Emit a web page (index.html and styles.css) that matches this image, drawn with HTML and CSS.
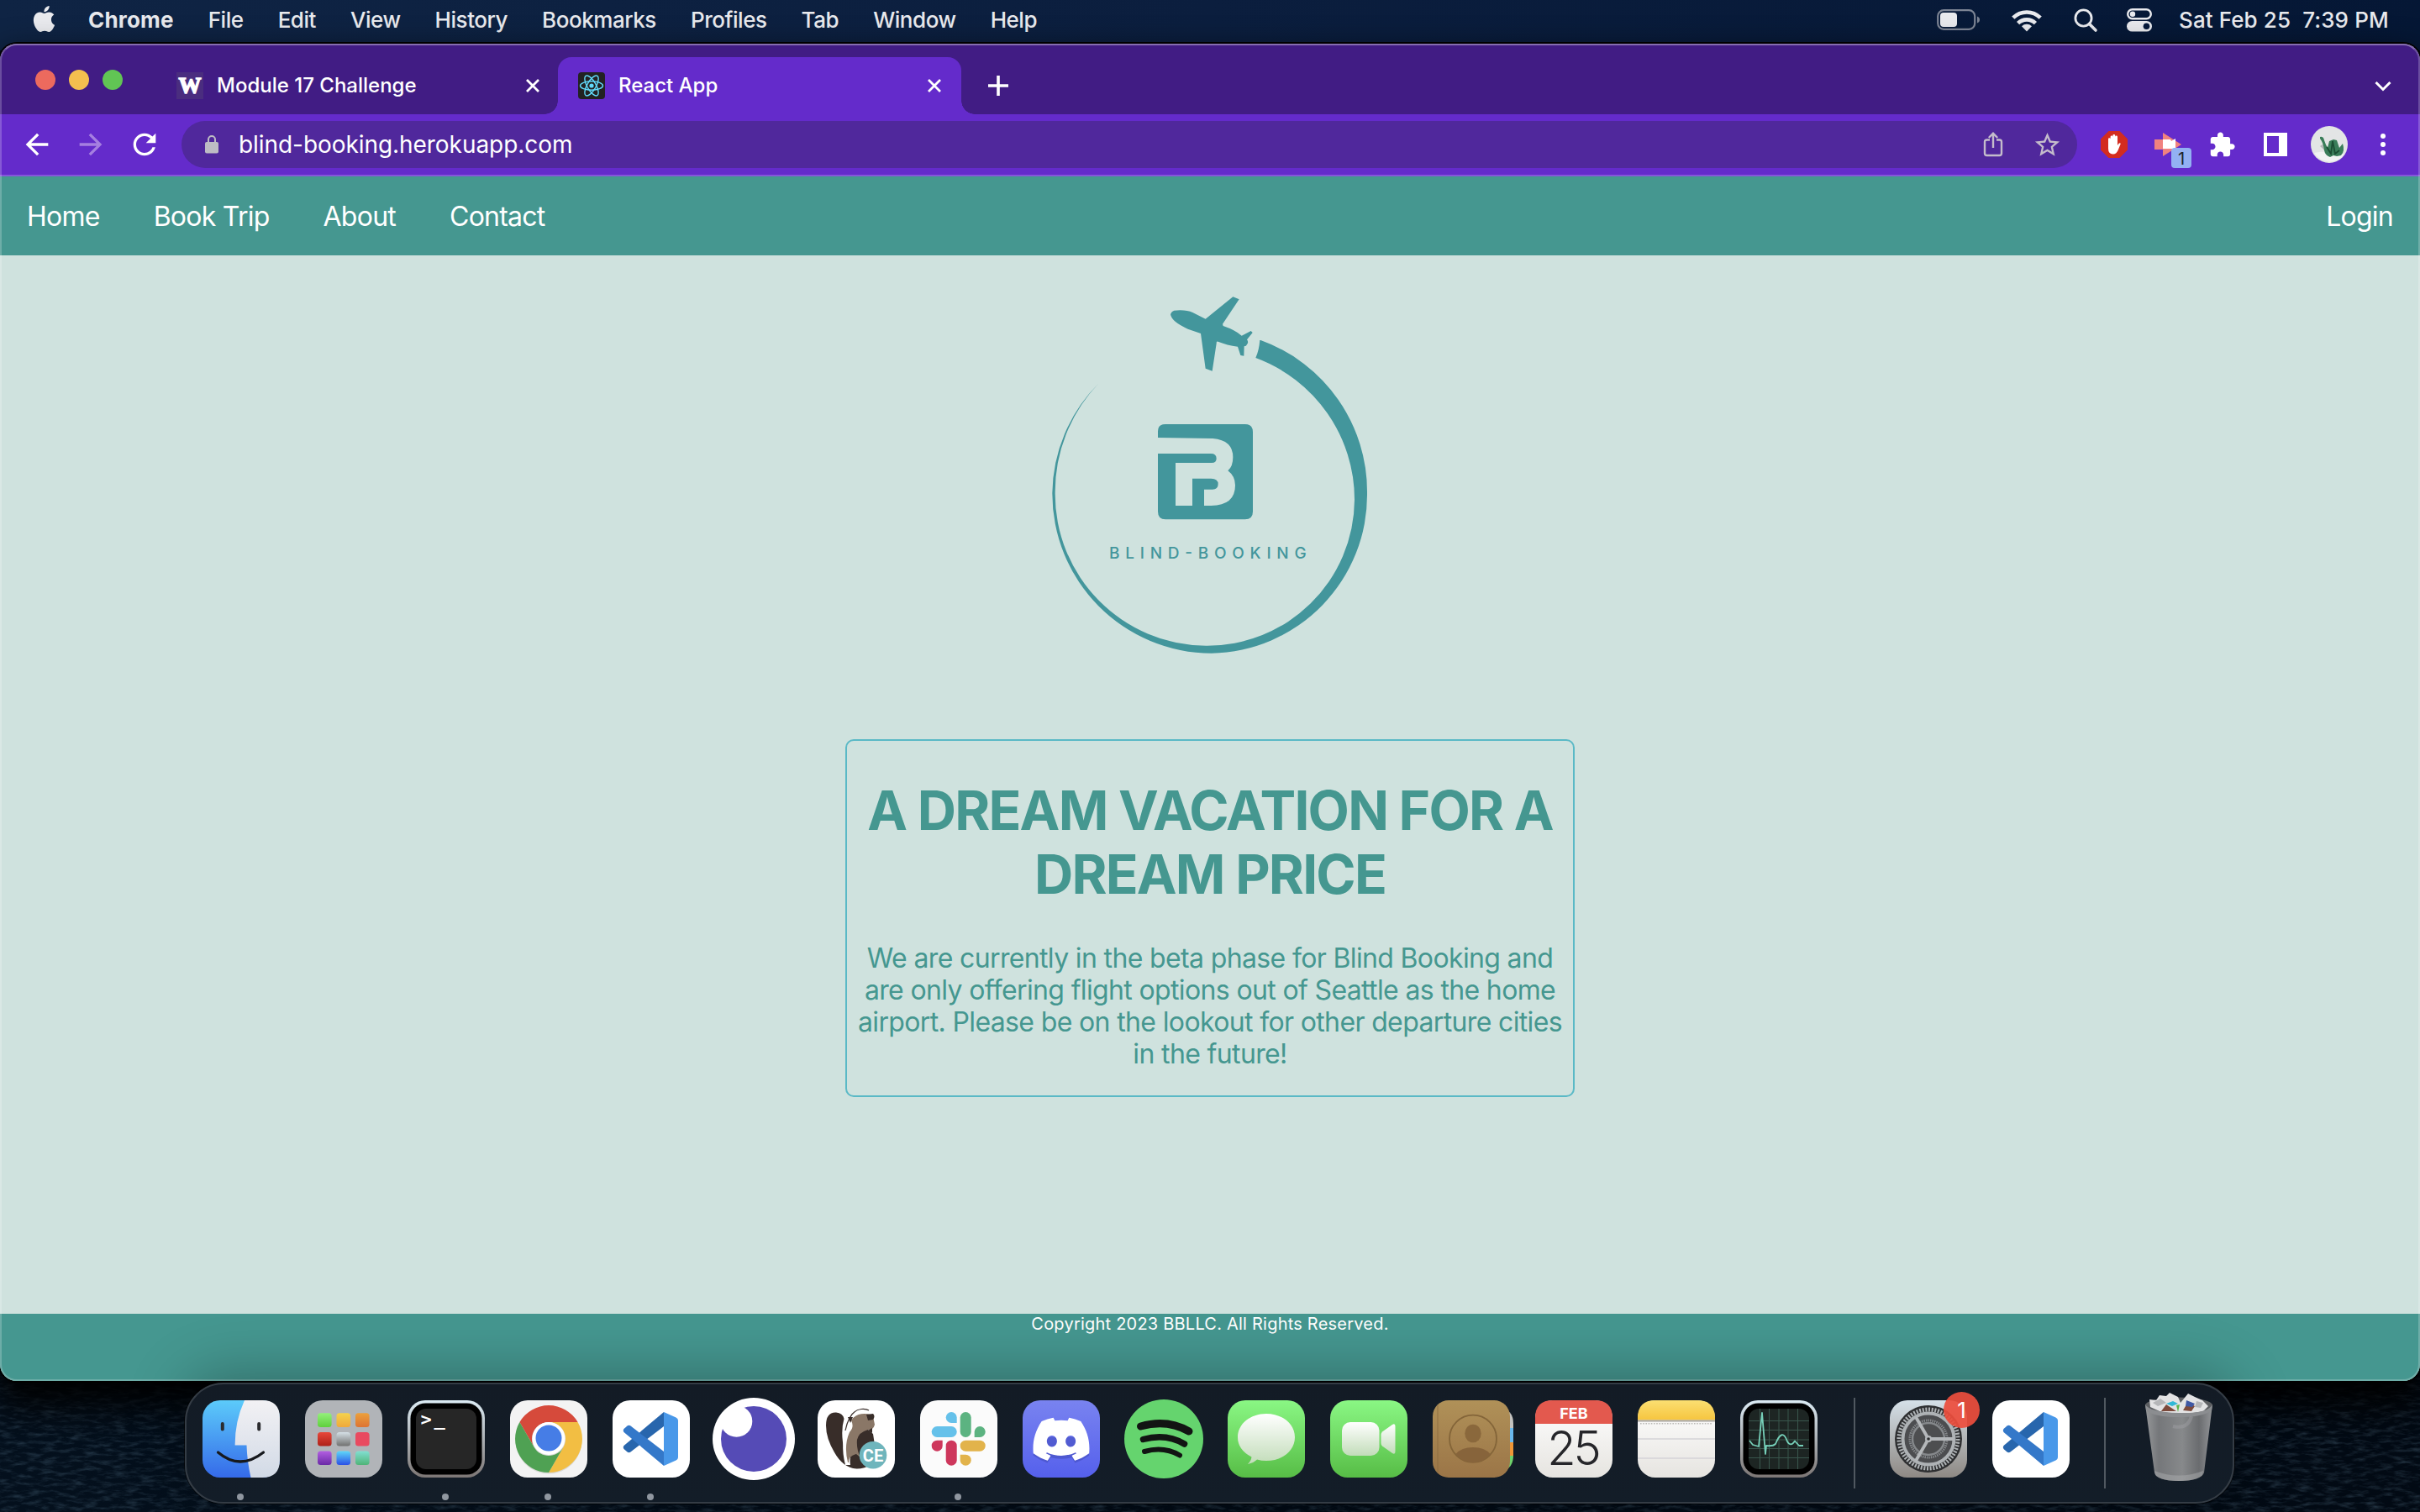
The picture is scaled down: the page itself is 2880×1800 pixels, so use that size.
FILE: index.html
```html
<!DOCTYPE html>
<html lang="en">
<head>
<meta charset="utf-8">
<title>React App</title>
<link rel="stylesheet" href="styles.css">
</head>
<body>
<div class="desktop">
  <svg class="wallpaper" width="2880" height="180" aria-hidden="true">
    <filter id="waves" x="0" y="0" width="100%" height="100%">
      <feTurbulence type="fractalNoise" baseFrequency="0.06 0.22" numOctaves="4" seed="7"/>
      <feColorMatrix values="0 0 0 0 .2  0 0 0 0 .36  0 0 0 0 .5  1.6 0 0 0 -.7"/>
    </filter>
    <rect width="2880" height="180" filter="url(#waves)"/>
  </svg>

  <header class="menubar">
    <svg class="apple" viewBox="0 0 24 24" fill="#e9eaee"><path d="M12.152 6.896c-.948 0-2.415-1.078-3.96-1.04-2.04.027-3.91 1.183-4.961 3.014-2.117 3.675-.546 9.103 1.519 12.09 1.013 1.454 2.208 3.09 3.792 3.039 1.52-.065 2.09-.987 3.935-.987 1.831 0 2.35.987 3.96.948 1.637-.026 2.676-1.48 3.676-2.948 1.156-1.688 1.636-3.325 1.662-3.415-.039-.013-3.182-1.221-3.22-4.857-.026-3.04 2.48-4.494 2.597-4.559-1.429-2.09-3.623-2.324-4.39-2.376-2-.156-3.675 1.09-4.61 1.09zM15.53 3.83c.843-1.012 1.4-2.427 1.245-3.83-1.207.052-2.662.805-3.532 1.818-.78.896-1.454 2.338-1.273 3.714 1.338.104 2.715-.688 3.559-1.701"/></svg>
    <nav class="menus">
      <b>Chrome</b><span>File</span><span>Edit</span><span>View</span><span>History</span><span>Bookmarks</span><span>Profiles</span><span>Tab</span><span>Window</span><span>Help</span>
    </nav>
    <div class="status">
      <svg width="52" height="26" viewBox="0 0 52 26"><rect x="1.2" y="1.2" width="44" height="22.6" rx="7" fill="none" stroke="#7c8494" stroke-width="2.2"/><rect x="4" y="4" width="20" height="17" rx="4" fill="#e9eaee"/><path d="M48 8.500q3 1.200 3 4t-3 4z" fill="#7c8494"/></svg>
      <svg width="36" height="27" viewBox="0 0 36 27"><g fill="none" stroke="#e9eaee" stroke-width="4.600"><path d="M1.800 10.200a23 23 0 0 1 32.400 0"/><path d="M7.600 16.600a14.800 14.800 0 0 1 20.800 0"/></g><path d="M18 26.500l-6-6.300a8.600 8.600 0 0 1 12 0z" fill="#e9eaee"/></svg>
      <svg width="28" height="28" viewBox="0 0 28 28" fill="none" stroke="#e9eaee" stroke-width="2.800"><circle cx="11.500" cy="11.500" r="9.600"/><path d="M18.500 18.500l7.500 7.500" stroke-width="3.600" stroke-linecap="round"/></svg>
      <svg width="30" height="28" viewBox="0 0 30 28"><rect x="1.200" y="1.200" width="27.600" height="11" rx="5.500" fill="none" stroke="#e9eaee" stroke-width="2.400"/><circle cx="7" cy="6.700" r="3.200" fill="#e9eaee"/><rect y="15" width="30" height="12.600" rx="6.300" fill="#e9eaee"/><circle cx="23.500" cy="21.300" r="3.800" fill="#06183a"/></svg>
      <time class="clock">Sat Feb 25&nbsp; 7:39 PM</time>
    </div>
  </header>

  <section class="window">
    <div class="tabstrip">
      <div class="lights"><i class="red"></i><i class="yellow"></i><i class="green"></i></div>
      <div class="tab">
        <span class="favicon fav-w">W</span>
        <span class="tab-title">Module 17 Challenge</span>
        <svg class="close" viewBox="0 0 20 20"><path d="M3 3l14 14M17 3L3 17"/></svg>
      </div>
      <div class="tab active">
        <svg class="favicon" viewBox="0 0 32 32"><rect width="32" height="32" rx="4" fill="#222"/><g fill="none" stroke="#61dafb" stroke-width="1.400"><ellipse cx="16" cy="16" rx="13.500" ry="5.200"/><ellipse cx="16" cy="16" rx="13.500" ry="5.200" transform="rotate(60 16 16)"/><ellipse cx="16" cy="16" rx="13.500" ry="5.200" transform="rotate(120 16 16)"/></g><circle cx="16" cy="16" r="2.600" fill="#61dafb"/></svg>
        <span class="tab-title">React App</span>
        <svg class="close" viewBox="0 0 20 20"><path d="M3 3l14 14M17 3L3 17"/></svg>
      </div>
      <svg class="newtab" viewBox="0 0 24 24"><path d="M12 0v24M0 12h24" stroke="#fff" stroke-width="3.600"/></svg>
      <svg class="tabsearch" viewBox="0 0 20 14"><path d="M1.500 2l8.500 8.500L18.500 2" fill="none" stroke="#fff" stroke-width="3"/></svg>
    </div>

    <div class="toolbar">
      <svg class="nav-icon" viewBox="0 0 24 24"><path fill="#fff" d="M20 11H7.830l5.590-5.590L12 4l-8 8 8 8 1.410-1.410L7.830 13H20v-2z"/></svg>
      <svg class="nav-icon" viewBox="0 0 24 24"><path fill="#a57fe0" d="M4 13h12.170l-5.590 5.590L12 20l8-8-8-8-1.410 1.410L16.170 11H4v2z"/></svg>
      <svg class="nav-icon" viewBox="0 0 24 24"><path fill="#fff" d="M17.650 6.350C16.200 4.900 14.210 4 12 4c-4.420 0-7.990 3.580-7.990 8s3.570 8 7.990 8c3.730 0 6.840-2.550 7.730-6h-2.080c-.82 2.330-3.040 4-5.650 4-3.310 0-6-2.690-6-6s2.690-6 6-6c1.660 0 3.140.69 4.220 1.780L13 11h7V4l-2.350 2.350z"/></svg>
      <div class="omnibox">
        <svg class="lock" viewBox="0 0 16 22"><rect y="8" width="16" height="13.500" rx="2" fill="#bdbcc4"/><path d="M4 9V5a4 4 0 0 1 8 0v4" fill="none" stroke="#bdbcc4" stroke-width="2"/></svg>
        <span class="url">blind-booking.herokuapp.com</span>
        <span class="cell"><svg width="24" height="30" viewBox="0 0 24 30" fill="none" stroke="#c4bccb" stroke-width="2.400"><path d="M8 9.500H4.500Q2 9.500 2 12v13.500Q2 28 4.500 28h15q2.500 0 2.500-2.500V12q0-2.500-2.500-2.500H16M12 19V2M6.800 7L12 1.800 17.200 7"/></svg></span>
        <span class="cell"><svg width="35" height="35" viewBox="0 0 24 24" fill="#c4bccb"><path d="M22 9.240l-7.190-.62L12 2 9.190 8.630 2 9.240l5.460 4.730L5.820 21 12 17.270 18.180 21l-1.630-7.030L22 9.240zM12 15.400l-3.760 2.270 1-4.280-3.320-2.880 4.380-.38L12 6.100l1.710 4.040 4.380.38-3.320 2.880 1 4.280L12 15.400z"/></svg></span>
      </div>
      <span class="cell"><svg width="32" height="32" viewBox="0 0 32 32"><path d="M9.500 0h13L32 9.500v13L22.500 32h-13L0 22.500v-13z" fill="#d32c1f"/><path d="M9 16V9.500a1.300 1.300 0 0 1 2.600 0V7a1.400 1.400 0 0 1 2.800 0V5.500a1.400 1.400 0 0 1 2.800 0V7a1.400 1.400 0 0 1 2.800 0v10l1.600-2.200q1.400-1 2.200.2L21 22q-2 5.500-6.500 5.500Q9 27 9 21z" fill="#fff"/></svg></span>
      <span class="cell ext"><svg width="32" height="28" viewBox="0 0 32 28"><path d="M0 8h10v12H0z" fill="#f0827f"/><path d="M10 0l22 14-22 14z" fill="#f0827f"/><path d="M10 8h9l1 2 5-3v12H10z" fill="#fff"/></svg><b class="ext-badge">1</b></span>
      <span class="cell"><svg width="33" height="33" viewBox="0 0 24 24" fill="#fff"><path d="M20.500 11H19V7c0-1.100-.9-2-2-2h-4V3.500C13 2.120 11.880 1 10.500 1S8 2.120 8 3.500V5H4c-1.100 0-1.990.9-1.990 2v3.800H3.500c1.490 0 2.700 1.210 2.700 2.700s-1.210 2.700-2.700 2.700H2V20c0 1.100.9 2 2 2h3.800v-1.500c0-1.490 1.210-2.700 2.700-2.700 1.490 0 2.700 1.210 2.700 2.700V22H17c1.100 0 2-.9 2-2v-4h1.500c1.380 0 2.500-1.120 2.500-2.500S21.880 11 20.500 11z"/></svg></span>
      <span class="cell"><svg width="28" height="28" viewBox="0 0 28 28"><path fill="#fff" fill-rule="evenodd" d="M0 0h28v28H0zM4 4v20h14V4z"/></svg></span>
      <span class="cell"><svg width="44" height="44" viewBox="0 0 44 44"><circle cx="22" cy="22" r="22" fill="#e3e5e5"/><path d="M4 32q14-4 36 2a22 22 0 0 1-36-2z" fill="#f2f3f3"/><path d="M11 24l3-2 4 2 3 9z" fill="#b4b8b8"/><path d="M11 13q4-1 5 4 2 6 4 9l2-8 5-2 4 1 2 6 1 3 4-5q3 9-2 14l-5 1-4-1-4 2q-6-2-7-8-1-9-5-14z" fill="#3a7d59"/><path d="M19 25l5 8 2-15 3 15 5-4" fill="none" stroke="#1b4d33" stroke-width="1.800"/></svg></span>
      <span class="cell"><svg width="6" height="28" viewBox="0 0 6 28" fill="#fff"><circle cx="3" cy="4" r="3"/><circle cx="3" cy="14" r="3"/><circle cx="3" cy="24" r="3"/></svg></span>
    </div>

    <nav class="site-nav">
      <a>Home</a><a>Book Trip</a><a>About</a><a>Contact</a><a class="login">Login</a>
    </nav>

    <main class="page">
      <svg class="logo" viewBox="0 0 1320 1410" fill="#43969c">
        <path d="M519 136q0-12 13-17 42-4 66 7l46 23 98-79 22 9-59 88 2 7q44 15 66 35l33-17 6 6-20 25q7 10 0 17-2 7-10 7l-1 34-12-2-10-31q-39-5-68-17-9-4-8 6l-15 98-24-9-17-125-46-16q-56-25-61-49z"/>
        <path d="M841 225A575 575 0 0 1 1221 770A566 566 0 0 1 665 1343A570 570 0 0 1 97 770A562 562 0 0 1 260 382A562 562 0 0 0 107 770A542 542 0 0 0 645 1316A525 525 0 0 0 1176 795A540 540 0 0 0 823 288Q835 262 838 225z"/>
        <path d="M474 573V550q0-25 27-25h284q28 0 28 28v284q0 28-28 28H501q-27 0-27-28V630H663q20 0 20 17 0 16-17 16H537V816h60V719h67q25 0 25 20 0 19-20 19H639v58h25q86-2 86-73 0-32-26-52 18-15 18-48 0-61-72-67z"/>
        <text class="logo-text" x="300" y="1004" textLength="704">BLIND-BOOKING</text>
      </svg>
      <article class="card">
        <h1>A DREAM VACATION FOR A<br>DREAM PRICE</h1>
        <p>We are currently in the beta phase for Blind Booking and<br>are only offering flight options out of Seattle as the home<br>airport. Please be on the lookout for other departure cities<br>in the future!</p>
      </article>
    </main>

    <footer class="site-footer">Copyright 2023 BBLLC. All Rights Reserved.</footer>
  </section>

  <div class="dock">
    <svg class="defs" width="0" height="0" aria-hidden="true"><defs>
      <linearGradient id="gFinder" x2="0" y2="1"><stop stop-color="#5ccbfa"/><stop offset="1" stop-color="#356ae9"/></linearGradient>
      <linearGradient id="gFace" x2="0" y2="1"><stop stop-color="#f2f1f4"/><stop offset="1" stop-color="#d2dae6"/></linearGradient>
      <linearGradient id="gSilver" x2="0" y2="1"><stop stop-color="#dcebf4"/><stop offset="1" stop-color="#7c7674"/></linearGradient>
      <linearGradient id="gGreen" x2="0" y2="1"><stop stop-color="#8af784"/><stop offset="1" stop-color="#57bd46"/></linearGradient>
      <linearGradient id="gBubble" x2="0" y2="1"><stop stop-color="#fff"/><stop offset="1" stop-color="#c2dcb9"/></linearGradient>
      <linearGradient id="gDiscord" x2="0" y2="1"><stop stop-color="#7983f0"/><stop offset="1" stop-color="#5560ec"/></linearGradient>
      <linearGradient id="gBook" x2="0" y2="1"><stop stop-color="#b09158"/><stop offset="1" stop-color="#9b7547"/></linearGradient>
      <linearGradient id="gPaper" x2="0" y2="1"><stop stop-color="#fff"/><stop offset="1" stop-color="#e6e4e0"/></linearGradient>
      <linearGradient id="gNote" x2="0" y2="1"><stop stop-color="#fbdf72"/><stop offset="1" stop-color="#f6c53f"/></linearGradient>
      <linearGradient id="gGear" x2="0" y2="1"><stop stop-color="#d5e0e8"/><stop offset="1" stop-color="#8e8984"/></linearGradient>
      <linearGradient id="gLime" x2="0" y2="1"><stop stop-color="#93f07a"/><stop offset="1" stop-color="#5fd03e"/></linearGradient>
      <linearGradient id="gAmber" x2="0" y2="1"><stop stop-color="#f5d24c"/><stop offset="1" stop-color="#f0a93a"/></linearGradient>
      <linearGradient id="gOrange" x2="0" y2="1"><stop stop-color="#eca03c"/><stop offset="1" stop-color="#dd7433"/></linearGradient>
      <linearGradient id="gRed" x2="0" y2="1"><stop stop-color="#e8483a"/><stop offset="1" stop-color="#ad2118"/></linearGradient>
      <linearGradient id="gGray" x2="0" y2="1"><stop stop-color="#d5e0e6"/><stop offset="1" stop-color="#70706f"/></linearGradient>
      <linearGradient id="gPurple" x2="0" y2="1"><stop stop-color="#b35fe2"/><stop offset="1" stop-color="#6a2aa6"/></linearGradient>
      <linearGradient id="gBlue" x2="0" y2="1"><stop stop-color="#5fd8f9"/><stop offset="1" stop-color="#2a50e6"/></linearGradient>
      <linearGradient id="gTeal" x2="0" y2="1"><stop stop-color="#82dfd2"/><stop offset="1" stop-color="#4fb477"/></linearGradient>
      <linearGradient id="gCan"><stop stop-color="#96989a"/><stop offset=".2" stop-color="#75777a"/><stop offset=".55" stop-color="#87898b"/><stop offset=".8" stop-color="#6a6c6f"/><stop offset="1" stop-color="#939598"/></linearGradient>
      <symbol id="vscode" viewBox="0 0 92 92"><rect width="92" height="92" rx="21" fill="#fff"/><path d="M61 14v17L21.500 61.500q-2 1.500-4 0L13.500 58q-1.500-2 0-4z" fill="#2866ad"/><path d="M61 78V61L21.500 30.500q-2-1.500-4 0L13.500 34q-1.500 2 0 4z" fill="#3478c9"/><path d="M61 14l14.500 6.500q2.500 1 2.500 3.500v44q0 2.500-2.500 3.500L61 78z" fill="#4998e9"/></symbol>
    </defs></svg>

    <div class="app running"><svg viewBox="0 0 92 92"><rect width="92" height="92" rx="21" fill="url(#gFinder)"/><path d="M50 0H71Q92 0 92 21V71Q92 92 71 92H57.500Q53 72 52.500 53.500H38.600Q38.500 25 50 0z" fill="url(#gFace)"/><path d="M23.800 28v6.500M67.200 28v6.500" stroke="#2b2b2e" stroke-width="4" stroke-linecap="round"/><path d="M18.500 62q26 22 54 0" fill="none" stroke="#17191d" stroke-width="3.200" stroke-linecap="round"/></svg></div>
    <div class="app"><svg viewBox="0 0 92 92"><rect width="92" height="92" rx="21" fill="#b1b4b8"/><rect x="15" y="15.300" width="16.600" height="16.600" rx="3.500" fill="url(#gLime)"/><rect x="37.500" y="15.300" width="16.600" height="16.600" rx="3.500" fill="url(#gAmber)"/><rect x="60" y="15.300" width="16.600" height="16.600" rx="3.500" fill="url(#gOrange)"/><rect x="15" y="38" width="16.600" height="16.600" rx="3.500" fill="url(#gRed)"/><rect x="37.500" y="38" width="16.600" height="16.600" rx="3.500" fill="url(#gGray)"/><rect x="60" y="38" width="16.600" height="16.600" rx="3.500" fill="#e94a60"/><rect x="15" y="60.400" width="16.600" height="16.600" rx="3.500" fill="url(#gPurple)"/><rect x="37.500" y="60.400" width="16.600" height="16.600" rx="3.500" fill="url(#gBlue)"/><rect x="60" y="60.400" width="16.600" height="16.600" rx="3.500" fill="url(#gTeal)"/></svg></div>
    <div class="app running"><svg viewBox="0 0 92 92"><rect width="92" height="92" rx="21" fill="url(#gSilver)"/><rect x="3.500" y="3.500" width="85" height="85" rx="18" fill="#000"/><rect x="10" y="10" width="72" height="72" rx="12" fill="#262626"/><text class="prompt" x="15.500" y="30">&gt;</text><text class="prompt" x="31.500" y="30">_</text></svg></div>
    <div class="app running"><svg viewBox="0 0 92 92"><rect width="92" height="92" rx="21" fill="#f3f3f3"/><circle cx="46" cy="48" r="39.500" fill="#d9d9d6"/><path d="M11.400 26A40 40 0 0 1 80.600 26H46A20 20 0 0 0 28.700 56z" fill="#d64a3b"/><path d="M80.600 26A40 40 0 0 1 46 86L63.300 56A20 20 0 0 0 46 26z" fill="#f2be43"/><path d="M46 86A40 40 0 0 1 11.400 26L28.700 56A20 20 0 0 0 63.300 56z" fill="#4fa153"/><circle cx="46" cy="45.500" r="19.500" fill="#fff"/><circle cx="46" cy="45" r="15.500" fill="#467de6"/></svg></div>
    <div class="app running"><svg viewBox="0 0 92 92"><use href="#vscode"/></svg></div>
    <div class="app"><svg viewBox="0 0 92 92"><circle cx="46" cy="46" r="49" fill="#fff"/><circle cx="46" cy="46" r="39" fill="#554bb6"/><circle cx="25.500" cy="25" r="18.800" fill="#fff"/></svg></div>
    <div class="app"><svg viewBox="0 0 92 92"><rect width="92" height="92" rx="21" fill="#fff"/><path d="M10 30Q10 14 22 14.500 30 15 31.500 22 28 34 30 50 33 70 38 76L42 42 54 30 66 40Q70 60 66 76 54 82 46 81.500 30 80 20 62 10 45 10 30z" fill="#382d29"/><path d="M33 77Q26 50 36 27L42 30Q34 55 39 77z" fill="#fff"/><path d="M36 74Q31 54 38 38 44 32 40 24 45 16 56 16 63 16 66 19L68 29Q66 36 60 35 49 38 47 47 46 58 51 68L46 64Q37 66 37 74z" fill="#8a7767"/><path d="M58 17l8-1q3 3 0 7l-6 1zM36 20l6 0-3 7zM60 36l5-3v6z" fill="#382d29"/><path d="M33 36Q38 12 52 10.500q6-.5 9 1.500" fill="none" stroke="#382d29" stroke-width="1.200"/><circle cx="66" cy="65.300" r="16.300" fill="#6fb5bc"/><text class="ce" x="66" y="73">CE</text></svg></div>
    <div class="app running"><svg viewBox="0 0 92 92"><rect width="92" height="92" rx="21" fill="#fbfbfb"/><g fill="#65c1ea"><path d="M43.700 27H37.200a6.500 6.500 0 1 1 6.500-6.500z"/><rect x="13.700" y="31" width="30" height="13" rx="6.500"/></g><g fill="#5cb381"><rect x="47.700" y="14" width="13" height="30" rx="6.500"/><path d="M64.700 44V37.500a6.500 6.500 0 1 1 6.500 6.500z"/></g><g fill="#ce375c"><path d="M26.700 47.700V54.200a6.500 6.500 0 1 1-6.500-6.500z"/><rect x="30.700" y="47.700" width="13" height="30" rx="6.500"/></g><g fill="#e2b34b"><rect x="47.700" y="47.700" width="30" height="13" rx="6.500"/><path d="M47.700 64.700H54.200a6.500 6.500 0 1 1-6.500 6.500z"/></g></svg></div>
    <div class="app"><svg viewBox="0 0 92 92"><rect width="92" height="92" rx="21" fill="url(#gDiscord)"/><g transform="translate(12.500 12.800) scale(2.790)"><path fill="#3e47b5" opacity=".5" transform="translate(0 1)" d="M1 10L.1 18q3 2.200 6 3.100l1.400-2.200q4.500 1 9 0l1.400 2.200q3-.9 6-3.100L23 10z"/><path fill="#fff" d="M20.317 4.370a19.791 19.791 0 00-4.885-1.515.074.074 0 00-.079.037c-.211.375-.445.865-.608 1.250-1.845-.276-3.680-.276-5.487 0-.164-.393-.406-.874-.618-1.250a.077.077 0 00-.079-.037 19.736 19.736 0 00-4.885 1.515.070.070 0 00-.032.028C.533 9.046-.319 13.580.099 18.058a.082.082 0 00.031.056c2.053 1.508 4.041 2.423 5.993 3.029a.078.078 0 00.084-.028c.462-.630.873-1.295 1.226-1.994a.076.076 0 00-.042-.106c-.653-.248-1.274-.550-1.872-.892a.077.077 0 01-.008-.128c.126-.094.252-.192.372-.291a.074.074 0 01.078-.011c3.928 1.793 8.180 1.793 12.061 0a.074.074 0 01.079.010c.120.099.246.198.373.292a.077.077 0 01-.007.128 12.299 12.299 0 01-1.873.891.077.077 0 00-.041.107c.360.698.772 1.363 1.225 1.993a.076.076 0 00.084.029c1.961-.607 3.950-1.522 6.002-3.029a.077.077 0 00.031-.055c.500-5.177-.838-9.674-3.549-13.660a.061.061 0 00-.031-.029zM8.020 15.331c-1.183 0-2.157-1.086-2.157-2.419 0-1.333.956-2.419 2.157-2.419 1.211 0 2.176 1.095 2.157 2.419 0 1.333-.956 2.419-2.157 2.419zm7.975 0c-1.183 0-2.157-1.086-2.157-2.419 0-1.333.955-2.419 2.157-2.419 1.211 0 2.176 1.095 2.157 2.419 0 1.333-.946 2.419-2.157 2.419z"/></g></svg></div>
    <div class="app"><svg viewBox="0 0 92 92"><circle cx="46" cy="46" r="47" fill="#65d46e"/><g fill="none" stroke="#121413" stroke-linecap="round"><path d="M18.500 31Q50 22 76 37" stroke-width="9"/><path d="M21.500 46.500Q49 39 70.500 52" stroke-width="7.500"/><path d="M23 61Q46 54.500 65 65.500" stroke-width="6"/></g></svg></div>
    <div class="app"><svg viewBox="0 0 92 92"><rect width="92" height="92" rx="21" fill="url(#gGreen)"/><path d="M46 16C65 16 80 28 80 44S65 72 46 72q-6 0-11-1.500-4 4-11 5.500 4-4 4.500-8.500Q12 59 12 44C12 28 27 16 46 16z" fill="url(#gBubble)"/></svg></div>
    <div class="app"><svg viewBox="0 0 92 92"><rect width="92" height="92" rx="21" fill="url(#gGreen)"/><rect x="14" y="26" width="44.500" height="40" rx="10" fill="url(#gBubble)"/><path d="M60.500 41q0-2 1.500-3.500L74 29q3.500-2 3.500 2v30q0 4-3.500 2L62 54.500q-1.500-1.500-1.500-3.500z" fill="url(#gBubble)"/></svg></div>
    <div class="app"><svg viewBox="0 0 92 92"><path d="M84 12q12 0 12 16v5H84z" fill="#c4c3c0"/><path d="M84 33h12v17H84z" fill="#6ab9ee"/><path d="M84 50h12v16H84z" fill="#ee9637"/><path d="M84 66h12q0 14-12 18z" fill="#6fd16b"/><rect width="92" height="92" rx="19" fill="url(#gBook)"/><path d="M6 6v80" stroke="#8d6c40" stroke-width="1.500" opacity=".6"/><circle cx="48" cy="45.700" r="28" fill="none" stroke="#846539" stroke-width="1.800"/><ellipse cx="48" cy="39.500" rx="9.700" ry="10.800" fill="#8a683c"/><path d="M27.500 64Q34 56 48 56t20.500 8Q60 74.500 48 74.500T27.500 64z" fill="#87643b"/></svg></div>
    <div class="app"><svg viewBox="0 0 92 92"><rect width="92" height="92" rx="21" fill="url(#gPaper)"/><path d="M0 28V21Q0 0 21 0H71Q92 0 92 21v7z" fill="#e3594e"/><text class="cal-month" x="46" y="21.800">FEB</text><text class="cal-day" x="45" y="77.300">25</text></svg></div>
    <div class="app"><svg viewBox="0 0 92 92"><rect width="92" height="92" rx="21" fill="url(#gPaper)"/><path d="M0 23.500V21Q0 0 21 0H71Q92 0 92 21v2.500z" fill="url(#gNote)"/><path d="M0 24.500h92" stroke="#a9a6a0" stroke-width="2"/><path d="M3 27.800h86" stroke="#bbb9b6" stroke-width="1.600" stroke-dasharray="1.600 1.600"/><path d="M0 46h92M0 69h92" stroke="#d5d4d8" stroke-width="1.600"/></svg></div>
    <div class="app"><svg viewBox="0 0 92 92"><rect width="92" height="92" rx="21" fill="url(#gSilver)"/><rect x="3.500" y="3.500" width="85" height="85" rx="18" fill="#000"/><rect x="10" y="10" width="72" height="72" rx="12" fill="#1d2523"/><path d="M10 24.500h72M10 35.500h72M10 47h72M10 57.500h72M10 68.500h72M23.500 10v72M34.500 10v72M46 10v72M57 10v72M68.500 10v72" stroke="#39564d" stroke-width="1"/><path d="M11 48l4 5 7 2 4-40 4 49 1-10q8 1 11-2 8-20 14-3 4 7 9-.5l5 5.500h5" fill="none" stroke="#76d0b9" stroke-width="1.800" stroke-linejoin="round"/></svg></div>
    <i class="divider"></i>
    <div class="app"><svg viewBox="0 0 92 92"><rect width="92" height="92" rx="21" fill="url(#gGear)"/><circle cx="46" cy="46" r="40" fill="#2e2f31"/><circle cx="46" cy="46" r="35" fill="none" stroke="#aeb2b5" stroke-width="5" stroke-dasharray="2 1.660"/><circle cx="46" cy="46" r="30.500" fill="#4c4d50" stroke="#aeb2b5" stroke-width="4"/><circle cx="46" cy="46" r="22" fill="#3d3e40" stroke="#85888b" stroke-width="3" stroke-dasharray="1.500 1"/><circle cx="46" cy="46" r="19" fill="#4d4e50" stroke="#85888b" stroke-width="2.500"/><path d="M46 46h30M46 46L31 20M46 46L31 72" stroke="#b4b7ba" stroke-width="3.800"/><circle cx="46" cy="46" r="4" fill="#b4b7ba"/><circle cx="46" cy="46" r="1.800" fill="#2e2f31"/></svg><b class="app-badge">1</b></div>
    <div class="app"><svg viewBox="0 0 92 92"><use href="#vscode"/></svg></div>
    <i class="divider last"></i>
    <div class="app"><svg class="trash" viewBox="0 0 82 106"><path d="M1 14Q41 32 81 14L71 95Q68 105 41 105T12 95z" fill="url(#gCan)"/><path d="M12 93Q41 104 70 93L69 98Q62 105 41 105T13 98z" fill="#a9abad" opacity=".5"/><ellipse cx="41" cy="15" rx="40" ry="9.500" fill="#5c5e61"/><path d="M7 17L6 8 14 9 18 3 26 4 30 0 40 5 43 12 52 1 60 5 69 9 76 16 70 22Q41 28 18 22z" fill="#e3e3e4"/><path d="M10 12l9-5 7 5-10 4zM62 10l8 2-3 6-7-1z" fill="#b5b6b8"/><path d="M20 22l6-8 12 8zM46 21l6-10 8 5-4 6z" fill="#7c4a3c"/><path d="M26 13l8-3 6 3-7 3z" fill="#31b8d6"/><path d="M50 9l10 4-3 4-8-1z" fill="#3e57a3"/><path d="M38 15l4-1-2 9z" fill="#5bb548"/><path d="M1 14Q6 23 41 24T81 14L80 21Q70 29 41 29T2 21z" fill="#8b8d90"/><path d="M34 40Q52 44 56 28" fill="none" stroke="#a4a6a9" stroke-width="4" opacity=".4"/></svg></div>
  </div>
</div>
</body>
</html>
```
FILE: styles.css
```css
* { box-sizing: border-box; }

body {
  margin: 0;
  font-family: Inter, "Liberation Sans", sans-serif;
  color: #fff;
}

svg { display: block; flex: none; overflow: visible; }

.desktop {
  position: relative;
  display: flex;
  flex-direction: column;
  width: 2880px;
  height: 1800px;
  overflow: hidden;
  background: linear-gradient(90deg, #0f2444, #0b1e3e 50%, #051735) 0 0 / 100% 60px no-repeat,
              linear-gradient(90deg, #04101d, #020b15 50%, #020a14);
}

.wallpaper { position: absolute; left: 0; bottom: 0; opacity: .32; }

/* Menu bar */
.menubar {
  display: flex;
  align-items: center;
  height: 52px;
  padding: 0 38px 4px 37px;
  font-size: 26px;
  font-weight: 450;
  line-height: 32px;
  color: #e9eaee;
  white-space: pre;
}
.apple { width: 31px; height: 31px; margin-top: -4px; }
.menus { display: flex; gap: 41px; margin-left: 37px; }
.menus span { letter-spacing: -.45px; }
.menus b { letter-spacing: .2px; }
.status { display: flex; align-items: center; margin-left: auto; }
.status svg:nth-child(2) { margin-left: 37px; }
.status svg:nth-child(3) { margin-left: 38px; }
.status svg:nth-child(4) { margin-left: 35px; }
.clock { width: 249px; margin-left: 32px; letter-spacing: .1px; }

/* Browser window */
.window {
  position: relative;
  display: flex;
  flex-direction: column;
  height: 1592px;
  border-radius: 20px;
  overflow: hidden;
  background: #cfe2de;
  box-shadow: 0 0 0 2px #000, 0 24px 44px 6px #000;
}
.window::after {
  content: "";
  position: absolute;
  inset: 0;
  border: 2px solid rgba(255, 255, 255, .22);
  border-top-color: rgba(255, 255, 255, .36);
  border-radius: 20px;
}

.tabstrip {
  display: flex;
  align-items: flex-end;
  flex: none;
  height: 84px;
  background: #411c84;
}
.lights { display: flex; gap: 16px; width: 178px; padding: 0 0 29px 42px; }
.lights i { width: 24px; height: 24px; border-radius: 50%; }
.red { background: #ec6a5e; }
.yellow { background: #f4bf4f; }
.green { background: #61c554; }

.tab {
  position: relative;
  display: flex;
  align-items: center;
  width: 486px;
  height: 68px;
  padding: 0 20px 0 32px;
  font-size: 24px;
  font-weight: 450;
}
.tab.active {
  width: 480px;
  padding: 0 22px 0 24px;
  border-radius: 16px 16px 0 0;
  background: #642bcb;
}
.tab.active::before, .tab.active::after {
  content: "";
  position: absolute;
  bottom: 0;
  width: 16px;
  height: 16px;
}
.tab.active::before { right: 100%; background: radial-gradient(circle at 0 0, transparent 15.5px, #642bcb 16px); }
.tab.active::after { left: 100%; background: radial-gradient(circle at 100% 0, transparent 15.5px, #642bcb 16px); }
.favicon { width: 32px; height: 32px; margin-right: 16px; }
.fav-w {
  background: #4a2d7f;
  font: 700 27px/32px "Liberation Serif", serif;
  -webkit-text-stroke: 1.5px #fff;
  text-align: center;
}
.tab-title { padding-bottom: 1px; white-space: nowrap; }
.close { width: 20px; height: 20px; margin-left: auto; stroke: #fff; stroke-width: 2.8; fill: none; }
.newtab { width: 24px; height: 24px; margin: 0 0 22px 32px; }
.tabsearch { width: 20px; height: 14px; margin: 0 34px 26px auto; }

.toolbar {
  display: flex;
  align-items: center;
  flex: none;
  height: 74px;
  padding: 0 12px 0 24px;
  border-bottom: 2px solid #8556da;
  background: #642bcb;
}
.nav-icon { width: 40px; height: 40px; margin-right: 24px; }
.omnibox {
  display: flex;
  align-items: center;
  flex: 1;
  height: 56px;
  margin-right: 12px;
  padding: 0 4px 0 28px;
  border-radius: 28px;
  background: #50289c;
}
.lock { width: 16px; height: 22px; }
.url { margin: 0 auto 0 24px; font-size: 28px; letter-spacing: -.06px; }
.cell { position: relative; display: flex; justify-content: center; align-items: center; width: 64px; height: 56px; }
.ext-badge {
  position: absolute;
  left: 36px;
  bottom: 0;
  width: 24px;
  height: 24px;
  border-radius: 4px;
  background: #93b1f3;
  color: #20232b;
  font: 400 20px/26px Inter, sans-serif;
  text-align: center;
}

/* Site */
.site-nav {
  display: flex;
  align-items: center;
  flex: none;
  gap: 64px;
  height: 94px;
  padding: 0 32px;
  background: #459790;
  font-size: 32px;
  letter-spacing: -.75px;
}
.login { margin-left: auto; }
.page { display: flex; flex-direction: column; align-items: center; flex: 1; padding-top: 26px; }
.logo { width: 440px; height: 470px; }
.logo-text { font: 500 57px Inter, sans-serif; }
.card {
  width: 868px;
  height: 426px;
  margin-top: 80px;
  border: 2px solid #5ab9c6;
  border-radius: 10px;
  color: #459790;
  text-align: center;
  white-space: nowrap;
}
.card h1 { margin: 45px 0 43px; font-size: 64px; line-height: 76px; font-weight: 700; letter-spacing: -1.75px; }
.card p { margin: 0; font-size: 32px; line-height: 38px; letter-spacing: -.64px; }
.site-footer {
  flex: none;
  height: 80px;
  background: #459790;
  font-size: 20px;
  line-height: 24px;
  letter-spacing: .22px;
  text-align: center;
}

/* Dock */
.dock {
  position: relative;
  display: flex;
  align-items: flex-start;
  align-self: flex-start;
  height: 144px;
  margin: 2px 0 0 220px;
  padding: 19px 3px 0 4px;
  border: 2px solid #343c45;
  border-radius: 46px;
  background: linear-gradient(#131b25, #131d28);
  box-shadow: 0 0 0 1px rgba(0, 0, 0, .6), 0 -8px 70px rgba(0, 0, 0, .3);
}
.defs { position: absolute; }
.app { position: relative; display: flex; justify-content: center; width: 122px; height: 120px; }
.app > svg { width: 92px; height: 92px; }
.app .trash { width: 82px; height: 106px; margin-top: -9px; }
.running::after {
  content: "";
  position: absolute;
  left: 56px;
  bottom: 1px;
  width: 8px;
  height: 8px;
  border-radius: 50%;
  background: #9097a0;
}
.divider { width: 2px; height: 108px; margin: -3px 26px 0 28px; background: #505860; }
.divider.last { margin: -3px 26px 0 26px; }
.app-badge {
  position: absolute;
  left: 79px;
  top: -10px;
  width: 43px;
  height: 43px;
  border-radius: 50%;
  background: rgba(236, 78, 61, .93);
  font: 400 26px/43px Inter, sans-serif;
  text-align: center;
}
.prompt { font: 700 22px "DejaVu Sans Mono", monospace; fill: #fff; }
.ce { font: 700 20px Roboto, sans-serif; fill: #fff; text-anchor: middle; }
.cal-month { font: 700 18px Inter, sans-serif; fill: #fff; text-anchor: middle; }
.cal-day { font: 300 56px Inter, sans-serif; fill: #26262a; text-anchor: middle; letter-spacing: -3px; }
```
